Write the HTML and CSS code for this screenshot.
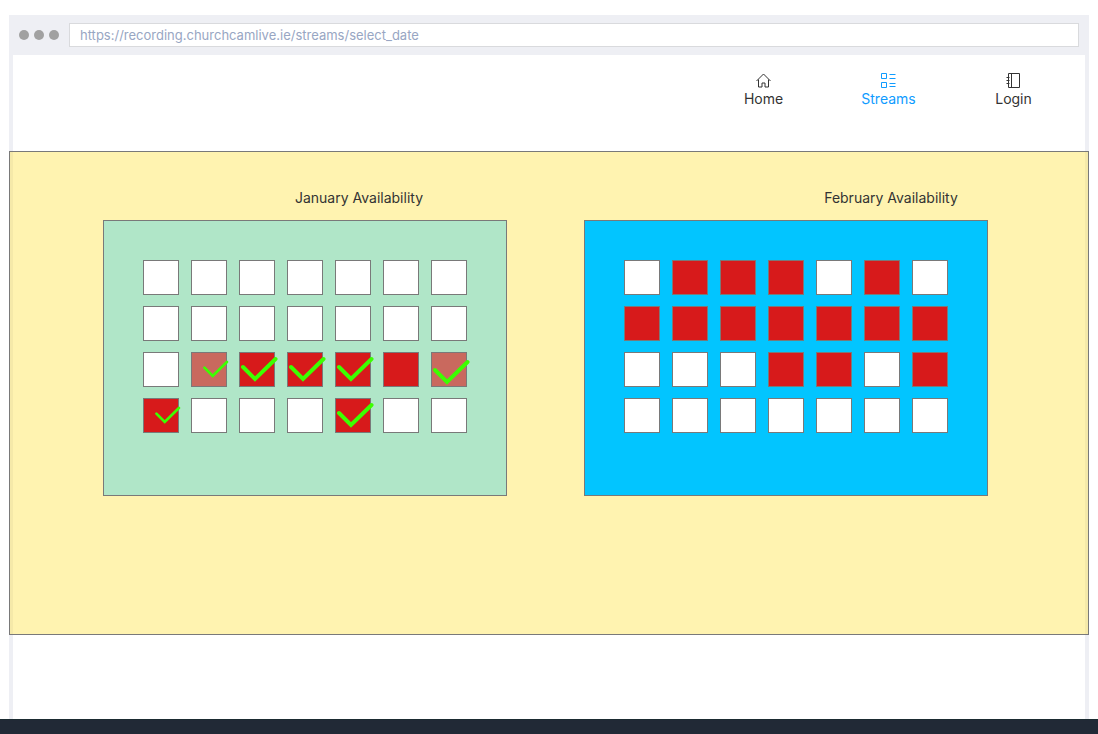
FILE: index.html
```html
<!DOCTYPE html>
<html lang="en">
<head>
<meta charset="utf-8">
<meta name="viewport" content="width=device-width, initial-scale=1">
<title>Select date</title>
<link rel="stylesheet" href="styles.css">
</head>
<body>
<div class="browser">
  <div class="toolbar">
    <div class="dots"><span class="dot"></span><span class="dot"></span><span class="dot"></span></div>
    <input class="address" type="text" aria-label="Address" value="https://recording.churchcamlive.ie/streams/select_date">
  </div>
  <nav class="nav">
    <a class="nav-item" href="#home">
      <svg class="nav-icon" viewBox="0 0 16 16"><path d="M.5 9 7.500 2l7 7M2.500 7.500V15H6v-4h3v4h3.500V7.500"/></svg>
      Home
    </a>
    <a class="nav-item active" href="#streams">
      <svg class="nav-icon" viewBox="0 0 16 16"><path d="M.5 1.500h5v5h-5zM.5 10.500h5v5h-5zM8.500 2.500h6M8.500 6.500h6M8.500 11.500h6M8.500 14.500h6"/></svg>
      Streams
    </a>
    <a class="nav-item" href="#login">
      <svg class="nav-icon" viewBox="0 0 16 16"><path d="M2.500 1.500h11v14h-11zM5.500 1.500v14M.5 5.500h3M.5 8.500h3M.5 11.500h3"/></svg>
      Login
    </a>
  </nav>
  <main class="months">
    <section class="month">
      <h2 class="month-title january">January Availability</h2>
      <div class="calendar green" id="january"></div>
    </section>
    <section class="month">
      <h2 class="month-title february">February Availability</h2>
      <div class="calendar blue" id="february"></div>
    </section>
  </main>
</div>
<footer class="footer"></footer>
<script src="calendar.js"></script>
</body>
</html>
```

FILE: styles.css
```css
* { box-sizing: border-box; }

body {
  display: flex;
  flex-direction: column;
  min-height: 100vh;
  margin: 0;
  background: #fff;
  color: #333;
  font: 14px/20px Inter, "Liberation Sans", sans-serif;
}

.browser {
  flex: 1;
  margin: 15px 9px 0;
  border: solid #eeeff4;
  border-width: 0 4px;
}

.footer {
  height: 15px;
  border-top: 1px solid #1b2b31;
  background: #212936;
}

.toolbar {
  display: flex;
  align-items: center;
  gap: 10px;
  height: 40px;
  padding: 0 6px;
  background: #eeeff4;
}

.dots { display: flex; gap: 5px; }

.dot {
  width: 10px;
  height: 10px;
  border-radius: 50%;
  background: #a1a1a1;
}

.address {
  flex: 1;
  height: 24px;
  padding: 0 10px;
  border: 1px solid #d9dadd;
  background: #fff;
  color: #98a6c3;
  font: inherit;
  font-size: 13px;
}

.nav {
  display: flex;
  justify-content: flex-end;
  height: 96px;
  padding: 17px 9px 0 0;
}

.nav-item {
  display: flex;
  flex-direction: column;
  align-items: center;
  width: 125px;
  height: 38px;
  gap: 1px;
  color: #333;
  text-decoration: none;
}

.nav-item.active { color: #0f9cff; }

.nav-icon {
  width: 16px;
  height: 16px;
  fill: none;
  stroke: currentColor;
}

.months {
  display: grid;
  grid-template-columns: 1fr 1fr;
  gap: 77px;
  min-height: 484px;
  margin: 0 -4px;
  padding: 36px 100px 138px 93px;
  border: 1px solid #797979;
  background: rgba(255, 225, 57, 0.4);
}

.month {
  display: flex;
  flex-direction: column;
  gap: 12px;
}

.month-title {
  margin: 0;
  font-size: 14px;
  font-weight: 400;
  text-align: center;
}

.january { padding-left: 108px; }
.february { padding-left: 210px; }

.calendar {
  flex: 1;
  display: grid;
  grid-template-columns: repeat(7, 36px);
  grid-auto-rows: 35px;
  align-content: start;
  gap: 11px 12px;
  padding: 39px;
  border: 1px solid #797979;
}

.green { background: #b0e6c8; }
.blue { background: #02c5ff; }

.day {
  position: relative;
  padding: 0;
  border: 1px solid #797979;
  background: #fff;
}

.day.booked { background: #d71a1b; }
.day.partial { background: #c9695e; }

.check {
  position: absolute;
  top: 3px;
  left: 0;
  width: 38px;
  height: 26px;
  fill: none;
  stroke: #3cff00;
  stroke-width: 4;
  stroke-linecap: round;
}

.check.small {
  top: 7px;
  left: 10px;
  width: 27px;
  height: 18px;
}

.partial .check:not(.small) { top: 6px; }
```

FILE: calendar.js
```js
// o = free, r = booked, p = partly booked; upper case adds a tick, s/q a small tick
const months = {
  january: "ooooooo ooooooo oqRRRrP soooRoo",
  february: "orrroro rrrrrrr ooorror ooooooo"
};
const states = { r: "booked", s: "booked", p: "partial", q: "partial" };

for (const [name, weeks] of Object.entries(months)) {
  const calendar = document.getElementById(name);
  [...weeks.replaceAll(" ", "")].forEach((code, index) => {
    const day = document.createElement("button");
    const state = states[code.toLowerCase()];
    const small = code === "s" || code === "q";
    day.type = "button";
    day.className = state ? `day ${state}` : "day";
    day.setAttribute("aria-label", `${name} ${index + 1}`);
    if (small || code !== code.toLowerCase()) {
      day.innerHTML = `<svg class="check${small ? " small" : ""}" viewBox="0 0 38 26"><path d="M3 11 15 23 35.500 3"/></svg>`;
    }
    calendar.append(day);
  });
}
```
